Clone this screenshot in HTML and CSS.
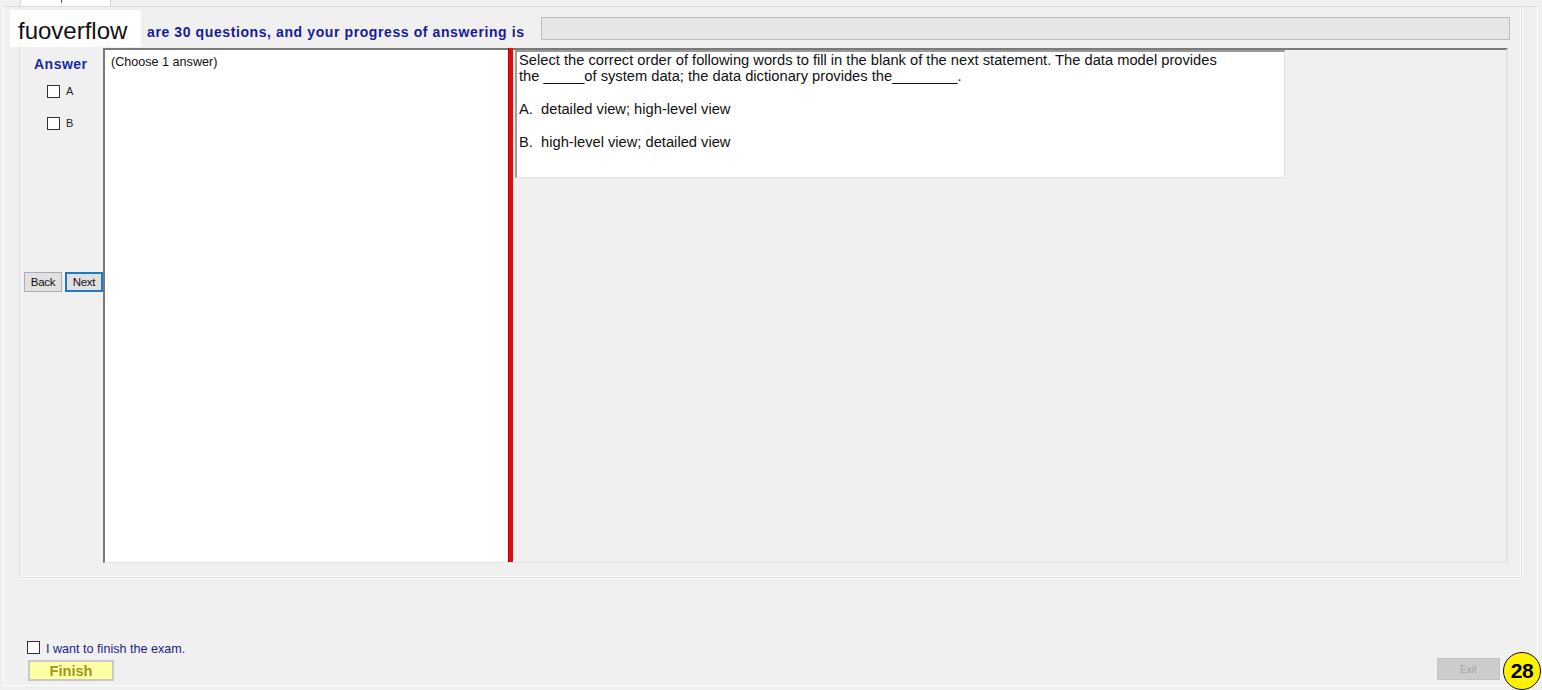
FILE: index.html
```html
<!DOCTYPE html>
<html>
<head>
<meta charset="utf-8">
<link rel="stylesheet" href="styles.css">
</head>
<body>
<div class="window">
  <div class="tabs"><div class="tab"><span class="tabmark"></span></div></div>
  <div class="page">
    <div class="group">
      <div class="head">
        <div class="headtext">are 30 questions, and your progress of answering is</div>
        <div class="progress"></div>
      </div>
      <div class="body">
        <div class="leftcol">
          <div class="answer">Answer</div>
          <label class="opt"><span class="cb"></span><span class="optl">A</span></label>
          <label class="opt"><span class="cb"></span><span class="optl">B</span></label>
          <div class="navbtns">
            <button class="btn">Back</button>
            <button class="btn next">Next</button>
          </div>
        </div>
        <div class="main">
          <div class="choose">(Choose 1 answer)</div>
          <div class="splitter"></div>
          <div class="qarea">
            <div class="qbox">
              <div class="ql">Select the correct order of following words to fill in the blank of the next statement. The data model provides</div>
              <div class="ql">the _____of system data; the data dictionary provides the________.</div>
              <div class="ql">&nbsp;</div>
              <div class="ql">A.&nbsp; detailed view; high-level view</div>
              <div class="ql">&nbsp;</div>
              <div class="ql">B.&nbsp; high-level view; detailed view</div>
            </div>
          </div>
        </div>
      </div>
    </div>
    <div class="footer">
      <div class="finishcol">
        <label class="finishchk"><span class="cb"></span><span class="fintext">I want to finish the exam.</span></label>
        <button class="finish">Finish</button>
      </div>
      <button class="exit">Exit</button>
    </div>
  </div>
  <div class="watermark">fuoverflow</div>
  <div class="badge">28</div>
</div>
</body>
</html>
```
FILE: styles.css
```css
* { box-sizing: border-box; }
html, body { margin: 0; padding: 0; }
body {
  width: 1542px;
  height: 690px;
  overflow: hidden;
  background: #f0f0f0;
  font-family: "Liberation Sans", Arial, sans-serif;
}
.window {
  position: relative;
  width: 1542px;
  height: 690px;
  display: flex;
  flex-direction: column;
}
.tabs {
  height: 6px;
  padding-left: 20px;
  display: flex;
}
.tab {
  width: 91px;
  height: 6px;
  background: #ffffff;
  border-left: 1px solid #d9d9d9;
  border-right: 1px solid #d9d9d9;
  display: flex;
  padding-left: 40px;
}
.tabmark {
  width: 1px;
  height: 3px;
  background: #555;
}
.page {
  margin-left: 3px;
  width: 1535px;
  height: 680px;
  border: 1px solid #ffffff;
  border-top: 1px solid #dcdcdc;
  display: flex;
  flex-direction: column;
}
.group {
  margin-left: 15px;
  width: 1503px;
  height: 571px;
  border: 1px solid #dcdcdc;
  border-top: none;
  box-shadow: inset -1px -1px 0 #ffffff, 1px 1px 0 #ffffff;
  display: flex;
  flex-direction: column;
}
.head {
  height: 41px;
  display: flex;
  align-items: flex-start;
}
.headtext {
  margin-left: 127px;
  margin-top: 17px;
  width: 394px;
  font-size: 14px;
  font-weight: bold;
  letter-spacing: 0.6px;
  color: #1a1a9c;
  line-height: 16px;
  white-space: nowrap;
}
.progress {
  margin-top: 10px;
  width: 969px;
  height: 23px;
  background: #e6e6e6;
  border: 1px solid #bcbcbc;
}
.body {
  display: flex;
  height: 515px;
  padding-left: 4px;
}
.leftcol {
  width: 79px;
  display: flex;
  flex-direction: column;
  align-items: flex-start;
}
.answer {
  margin-top: 8px;
  margin-left: 10px;
  font-size: 14px;
  font-weight: bold;
  letter-spacing: 0.5px;
  color: #1a2aa4;
  line-height: 16px;
}
.opt {
  display: flex;
  align-items: center;
  margin-left: 23px;
  height: 13px;
}
.opt:nth-of-type(1) { margin-top: 13px; }
.opt + .opt { margin-top: 19px; }
.cb {
  display: inline-block;
  width: 13px;
  height: 13px;
  border: 1px solid #333333;
  background: #ffffff;
  flex: none;
}
.optl {
  margin-left: 6px;
  font-size: 11px;
  color: #222;
  line-height: 13px;
}
.navbtns {
  margin-top: 142px;
  display: flex;
  gap: 3px;
}
.btn {
  width: 38px;
  height: 20px;
  padding: 0;
  background: #e1e1e1;
  border: 1px solid #adadad;
  font-family: "Liberation Sans", Arial, sans-serif;
  font-size: 11.5px;
  color: #111;
  letter-spacing: -0.3px;
}
.btn.next {
  border: 2px solid #1f7ac8;
}
.main {
  width: 1405px;
  height: 515px;
  display: flex;
  border-top: 2px solid #7a7a7a;
  border-left: 2px solid #7a7a7a;
  border-bottom: 1px solid #e3e3e3;
  border-right: 2px solid #e3e3e3;
  box-shadow: inset 0 -1px 0 #ffffff;
}
.choose {
  width: 403px;
  background: #ffffff;
  padding: 5px 0 0 6px;
  font-size: 12.6px;
  line-height: 15px;
  color: #111;
}
.splitter {
  width: 5px;
  background: #e00d0d;
  border-left: 1px solid #b00000;
  margin-top: -2px;
}
.qarea {
  flex: 1;
  padding-left: 2px;
  background: #f0f0f0;
}
.qbox {
  width: 770px;
  height: 128px;
  background: #ffffff;
  border-top: 2px solid #9a9a9a;
  border-left: 2px solid #a0a0a0;
  border-right: 1px solid #e3e3e3;
  border-bottom: 1px solid #e3e3e3;
  padding: 0 0 0 2px;
}
.ql {
  font-size: 14.7px;
  line-height: 16.4px;
  color: #111;
  white-space: nowrap;
}
.footer {
  flex: 1;
  display: flex;
  align-items: flex-end;
  justify-content: space-between;
  padding: 0 37px 4px 23px;
}
.finishcol {
  display: flex;
  flex-direction: column;
  align-items: flex-start;
}
.finishchk {
  display: flex;
  align-items: center;
  height: 14px;
}
.fintext {
  margin-left: 6px;
  font-size: 12.6px;
  color: #1c1c8c;
  line-height: 14px;
  position: relative;
  top: 2px;
}
.finish {
  margin-top: 6px;
  margin-left: 1px;
  width: 86px;
  height: 21px;
  padding: 0;
  background: #ffffa6;
  border: 2px solid #c9c9c9;
  font-family: "Liberation Sans", Arial, sans-serif;
  font-size: 14.6px;
  font-weight: bold;
  color: #9a9a1c;
}
.exit {
  width: 63px;
  height: 22px;
  padding: 0 0 0 22px;
  text-align: left;
  background: #cccccc;
  border: 1px solid #c4c4c4;
  font-family: "Liberation Sans", Arial, sans-serif;
  font-size: 10px;
  color: #a4a4a4;
  margin-bottom: 1px;
}
.watermark {
  position: absolute;
  left: 10px;
  top: 10px;
  width: 131px;
  height: 37px;
  background: #ffffff;
  font-size: 24px;
  color: #111;
  line-height: 42px;
  padding-left: 8px;
}
.badge {
  position: absolute;
  left: 1503px;
  top: 652px;
  width: 38px;
  height: 38px;
  border-radius: 50%;
  background: #fff200;
  border: 1.5px solid #111;
  font-size: 21px;
  font-weight: bold;
  color: #000;
  line-height: 36px;
  text-align: center;
  letter-spacing: -0.5px;
}
```
